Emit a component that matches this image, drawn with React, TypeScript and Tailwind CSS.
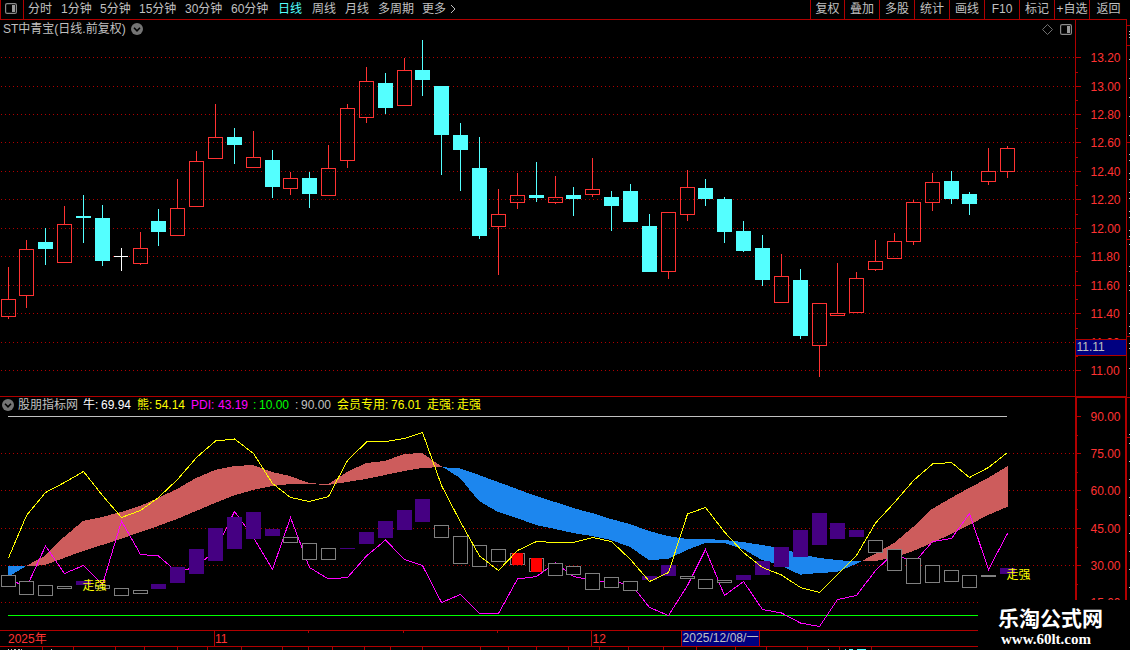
import React from "react";

type Kind = "up" | "down" | "flat";
// centre x, high, body top, body bottom, low, kind
type Candle = [number, number, number, number, number, Kind];

const candles: Candle[] = [
  [8, 267, 299, 317, 319, "up"], [26, 240, 249, 296, 308, "up"], [45, 228, 242, 249, 265, "down"],
  [64, 206, 224, 263, 263, "up"], [83, 195, 216, 218, 243, "down"], [102, 205, 218, 261, 266, "down"],
  [121, 248, 256, 257, 271, "flat"], [140, 232, 248, 264, 265, "up"], [158, 209, 221, 232, 246, "down"],
  [177, 179, 208, 236, 236, "up"], [196, 151, 161, 207, 207, "up"], [215, 104, 137, 159, 159, "up"],
  [234, 128, 137, 145, 164, "down"], [253, 131, 157, 168, 168, "up"], [272, 150, 160, 187, 198, "down"],
  [290, 172, 178, 189, 195, "up"], [309, 172, 178, 194, 208, "down"], [328, 145, 168, 196, 196, "up"],
  [347, 104, 108, 161, 168, "up"], [366, 67, 81, 118, 123, "up"], [385, 73, 83, 108, 114, "down"],
  [404, 58, 70, 106, 106, "up"], [422, 40, 70, 80, 96, "down"], [441, 86, 86, 135, 175, "down"],
  [460, 123, 135, 150, 191, "down"], [479, 137, 168, 236, 239, "down"], [498, 189, 214, 227, 275, "up"],
  [517, 173, 195, 203, 209, "up"], [536, 162, 195, 198, 202, "down"], [555, 176, 197, 203, 204, "up"],
  [573, 187, 195, 199, 216, "down"], [592, 158, 189, 195, 197, "up"], [611, 191, 197, 206, 231, "down"],
  [630, 184, 191, 222, 222, "down"], [649, 214, 226, 272, 272, "down"], [668, 212, 212, 272, 279, "up"],
  [687, 170, 187, 215, 221, "up"], [705, 179, 188, 199, 206, "down"], [724, 197, 199, 232, 243, "down"],
  [743, 221, 231, 251, 252, "down"], [762, 235, 248, 280, 286, "down"], [781, 254, 276, 303, 303, "up"],
  [800, 269, 280, 336, 339, "down"], [819, 303, 303, 346, 377, "up"], [837, 263, 313, 316, 316, "up"],
  [856, 272, 278, 313, 313, "up"], [875, 240, 261, 270, 271, "up"], [894, 233, 241, 259, 259, "up"],
  [913, 200, 202, 242, 245, "up"], [932, 173, 182, 203, 211, "up"], [951, 171, 181, 199, 204, "down"],
  [969, 192, 194, 204, 215, "down"], [988, 148, 171, 182, 185, "up"], [1007, 146, 148, 172, 178, "up"],
];

const xs = candles.map((c) => c[0]);

const fast = [
  577, 566, 555.7, 537, 521, 517, 512, 506, 498, 489, 478, 470, 466, 465, 472, 476, 483, 484.4, 472, 463, 461,
  454, 453, 466, 478, 501, 512, 518, 525, 529, 533, 536, 540, 547, 560, 559, 550, 543, 543, 549, 560, 565.5,
  574.7, 573, 572, 564, 554, 543, 527, 509, 498, 488, 478, 466,
];
const slow = [
  566, 566.5, 565, 558, 551, 545, 539, 532, 526, 519, 511, 503, 495.5, 490, 486, 484, 484, 485, 482, 479, 475,
  471, 468, 467, 468.5, 475, 482, 489, 496, 502, 508, 513, 519, 524, 531, 536, 539, 539, 540, 542, 545, 548, 554,
  558, 560, 561.5, 561, 557.5, 551, 543, 534, 525, 515, 506.5,
];
const yellow = [
  557.5, 515, 492, 482, 471, 495, 517, 510, 497, 479, 457, 440.5, 438.5, 453, 483, 497, 501, 496, 460, 441.5, 441,
  438, 432, 485, 521.5, 555.5, 570, 550, 541, 542, 542, 537, 541, 559, 581, 572, 513.5, 507, 531.5, 552, 567,
  574.5, 587, 592, 574, 555, 522.5, 502, 480, 463.5, 462, 477, 467, 452,
];
const pdi = [
  578, 587, 545.5, 573, 565, 584, 520.5, 554, 555.5, 572, 566, 550, 511, 537, 569, 517, 567, 578.5, 577, 555.5,
  539.5, 559, 565, 602, 594, 613, 613, 578.5, 576, 562.5, 576, 580, 582, 583, 607, 615, 585, 549, 595, 581, 609,
  612.5, 622.5, 626, 599, 595, 570, 552, 563, 541, 538, 513, 569, 533,
];

// top, bottom, g = outlined / p = filled / r = outlined with a red core
type Bar = [number, number, "g" | "p" | "r"];
const bars: Bar[] = [
  [575, 587, "g"], [581, 595, "g"], [585, 596, "g"], [586, 589, "g"], [581, 585, "p"], [585, 589, "g"],
  [588, 596, "g"], [590, 594, "g"], [584, 589, "p"], [567, 583, "p"], [549, 574, "p"], [528, 561, "p"],
  [517, 549, "p"], [512, 539, "p"], [529, 536, "p"], [537, 543, "g"], [543, 560, "g"], [548, 560, "g"],
  [548, 549, "p"], [532, 544, "p"], [521, 538, "p"], [510, 530, "p"], [499, 522, "p"], [525, 538, "g"],
  [536, 564, "g"], [545, 567, "g"], [549, 562, "g"], [553, 565, "r"], [558, 572, "r"], [563, 576, "g"],
  [566, 575, "g"], [573, 590, "g"], [577, 588, "g"], [581, 591, "g"], [576, 580, "p"], [565, 576, "p"],
  [576, 579, "g"], [579, 589, "g"], [580, 583, "g"], [575, 580, "p"], [561, 575, "p"], [547, 567, "p"],
  [530, 557, "p"], [513, 545, "p"], [523, 539, "p"], [530, 537, "p"], [540, 553, "g"], [549, 571, "g"],
  [558, 584, "g"], [565, 583, "g"], [570, 582, "g"], [575, 588, "g"], [575, 577, "g"], [568, 574, "p"],
];

const priceLevels: [string, number][] = [
  ["13.20", 57], ["13.00", 86], ["12.80", 114], ["12.60", 142], ["12.40", 171], ["12.20", 199],
  ["12.00", 228], ["11.80", 256], ["11.60", 285], ["11.40", 313], ["11.20", 342], ["11.00", 370],
];
const priceMinor = [72, 100, 128, 157, 185, 214, 242, 271, 299, 328, 356];
const indLevels: [string, number][] = [
  ["90.00", 416], ["75.00", 453], ["60.00", 490], ["45.00", 528], ["30.00", 565], ["15.00", 602],
];
const indMinor = [435, 472, 509, 547, 584];

const line = (ys: number[]) => ys.map((y, i) => `${xs[i] + 0.5},${y + 0.5}`).join(" ");

function bandPieces() {
  const out: { pts: string; fill: string }[] = [];
  const color = (d: number) => (d < 0 ? "#cd5c5c" : "#1c86ee");
  for (let i = 0; i < xs.length - 1; i++) {
    const x1 = xs[i];
    const x2 = i === xs.length - 2 ? xs[i + 1] + 1 : xs[i + 1];
    const d1 = fast[i] - slow[i];
    const d2 = fast[i + 1] - slow[i + 1];
    if (d1 * d2 < 0) {
      const t = d1 / (d1 - d2);
      const xc = x1 + (x2 - x1) * t;
      const yc = fast[i] + (fast[i + 1] - fast[i]) * t;
      out.push({ pts: `${x1},${fast[i]} ${xc},${yc} ${x1},${slow[i]}`, fill: color(d1) });
      out.push({ pts: `${xc},${yc} ${x2},${fast[i + 1]} ${x2},${slow[i + 1]}`, fill: color(d2) });
    } else {
      out.push({
        pts: `${x1},${fast[i]} ${x2},${fast[i + 1]} ${x2},${slow[i + 1]} ${x1},${slow[i]}`,
        fill: color(d1 + d2),
      });
    }
  }
  return out;
}

const Grid = ({ ys }: { ys: number[] }) => (
  <g>
    {ys.map((y) => (
      <line key={y} x1="1" x2="1075" y1={y + 0.5} y2={y + 0.5} stroke="#b00000" strokeDasharray="1 3" />
    ))}
  </g>
);

const CandleShape = ({ c }: { c: Candle }) => {
  const [x, h, t, b, l, k] = c;
  if (k === "flat")
    return (
      <g fill="#ffffff">
        <rect x={x - 7} y={t} width={14} height={1} />
        <rect x={x} y={h} width={1} height={l - h} />
      </g>
    );
  if (k === "down")
    return (
      <g fill="#54ffff">
        <rect x={x} y={h} width={1} height={l - h} />
        <rect x={x - 7} y={t} width={15} height={b - t} />
      </g>
    );
  return (
    <g fill="#ff3232">
      <rect x={x} y={h} width={1} height={t - h} />
      <rect x={x} y={b} width={1} height={l - b} />
      <rect x={x - 6.5} y={t + 0.5} width={14} height={b - t - 1} fill="none" stroke="#ff3232" />
    </g>
  );
};

const BarShape = ({ x, bar }: { x: number; bar: Bar }) => {
  const [t, b, k] = bar;
  if (k === "p") return <rect x={x - 7} y={t} width={15} height={b - t} fill="#450082" />;
  return (
    <g>
      <rect x={x - 6.5} y={t + 0.5} width={14} height={b - t - 1} fill="#000000" stroke="#808080" />
      {k === "r" && <rect x={x - 5} y={t} width={11} height={b - t} fill="#ff0000" />}
    </g>
  );
};

const Dropdown = () => (
  <svg className="block shrink-0" width="12" height="12" viewBox="0 0 12 12">
    <circle cx="6" cy="6" r="6" fill="#747474" />
    <path d="M3 4.8 L6 7.8 L9 4.8" fill="none" stroke="#000000" strokeWidth="1.6" />
  </svg>
);

const PanelIcon = () => (
  <svg className="block shrink-0" width="12" height="11" viewBox="0 0 12 11">
    <rect x="0.6" y="0.6" width="10.8" height="9.8" rx="1.5" fill="none" stroke="#8a8a8a" strokeWidth="1.2" />
    <rect x="7" y="2" width="3" height="7" fill="#9a9a9a" />
  </svg>
);

const periods: [string, string][] = [
  ["分时", "w-[33px]"], ["1分钟", "w-[39px]"], ["5分钟", "w-[39px]"], ["15分钟", "w-[46px]"],
  ["30分钟", "w-[46px]"], ["60分钟", "w-[47px]"], ["日线", "w-[34px]"], ["周线", "w-[33px]"],
  ["月线", "w-[33px]"], ["多周期", "w-[44px]"], ["更多", "w-[28px]"],
];
const tools: [string, string][] = [
  ["复权", "w-[34px]"], ["叠加", "w-[35px]"], ["多股", "w-[35px]"], ["统计", "w-[35px]"], ["画线", "w-[35px]"],
  ["F10", "w-[35px]"], ["标记", "w-[35px]"], ["+自选", "w-[35px]"], ["返回", "w-[38px]"],
];

const Toolbar = () => (
  <header className="flex h-5 shrink-0 border-b border-l border-[#b00000] text-[#c0c0c0]">
    <div className="flex w-[23px] items-center border-r border-[#b00000] pb-[2px] pl-1">
      <PanelIcon />
    </div>
    <nav className="flex flex-1 items-center pb-[2px] pl-1">
      {periods.map(([t, w]) => (
        <span key={t} className={`${w} shrink-0 ${t === "日线" ? "text-[#54ffff]" : ""}`}>
          {t}
        </span>
      ))}
      <svg width="6" height="10" viewBox="0 0 6 10">
        <path d="M1 1 L5 5 L1 9" fill="none" stroke="#c0c0c0" />
      </svg>
    </nav>
    <div className="flex">
      {tools.map(([t, w]) => (
        <span
          key={t}
          className={`${w} flex items-center justify-center border-l border-[#b00000] pb-[2px] whitespace-nowrap`}
        >
          {t}
        </span>
      ))}
    </div>
  </header>
);

const legend: [string, string][] = [
  ["股朋指标网", "w-[65px] text-[#c0c0c0]"], ["牛:", "w-[18px] text-white"], ["69.94", "w-[36px] text-white"],
  ["熊:", "w-[18px] text-[#ffff00]"], ["54.14", "w-[36px] text-[#ffff00]"], ["PDI:", "w-[27px] text-[#ff00ff]"],
  ["43.19", "w-[35px] text-[#ff00ff]"], [":", "w-[6px] text-[#00ff00]"], ["10.00", "w-[36px] text-[#00ff00]"],
  [":", "w-[6px] text-[#c0c0c0]"], ["90.00", "w-[36px] text-[#c0c0c0]"], ["会员专用:", "w-[54px] text-[#ffff00]"],
  ["76.01", "w-[36px] text-[#ffff00]"], ["走强:", "w-[30px] text-[#ffff00]"], ["走强", "w-[30px] text-[#ffff00]"],
];

const PricePanel = () => (
  <section className="flex h-[376px] shrink-0">
    <div className="flex w-[1075px] flex-col">
      <div className="flex h-5 shrink-0 items-center pb-[2px] pl-[3px] text-[#c0c0c0]">
        <span className="w-[128px]">ST中青宝(日线.前复权)</span>
        <Dropdown />
        <span className="flex-1" />
        <svg className="mr-[7px]" width="11" height="11" viewBox="0 0 11 11">
          <path d="M5.5 0.5 L10.5 5.5 L5.5 10.5 L0.5 5.5 Z" fill="none" stroke="#707070" />
        </svg>
        <span className="mr-[3px]">
          <PanelIcon />
        </span>
      </div>
      <svg className="block" width="1075" height="356" viewBox="0 40 1075 356" shapeRendering="crispEdges">
        <Grid ys={priceLevels.map((p) => p[1])} />
        {candles.map((c) => (
          <CandleShape key={c[0]} c={c} />
        ))}
      </svg>
    </div>
    <svg className="block" width="52" height="376" viewBox="1075 20 52 376" shapeRendering="crispEdges">
      <rect x="1075" y="20" width="1" height="376" fill="#b00000" />
      <rect x="1126" y="20" width="1" height="376" fill="#b00000" />
      {priceLevels.map(([t, y]) => (
        <g key={t}>
          <rect x="1075" y={y} width="6" height="1" fill="#b00000" />
          <text x="1090.5" y={y + 5} fill="#ff3232">{t}</text>
        </g>
      ))}
      {priceMinor.map((y) => (
        <rect key={y} x="1075" y={y} width="3" height="1" fill="#b00000" />
      ))}
      <rect x="1075" y="339" width="51" height="17" fill="#b00000" />
      <rect x="1076" y="340" width="50" height="15" fill="#000080" />
      <text x="1076.5" y="351" fill="#c0c0c0">11.11</text>
    </svg>
  </section>
);

const IndicatorPanel = () => (
  <section className="flex h-[234px] shrink-0">
    <div className="flex w-[1075px] flex-col">
      <div className="flex h-[19px] shrink-0 items-center border-t border-[#b00000] pb-[2px] pl-[2px]">
        <span className="w-[16px]">
          <Dropdown />
        </span>
        {legend.map(([t, c], i) => (
          <span key={i} className={`${c} shrink-0 whitespace-nowrap`}>
            {t}
          </span>
        ))}
      </div>
      <svg className="block" width="1075" height="215" viewBox="0 415 1075 215" shapeRendering="crispEdges">
        <Grid ys={indLevels.slice(1).map((p) => p[1])} />
        <rect x="8" y="416" width="999" height="1" fill="#c0c0c0" />
        {bandPieces().map((p, i) => (
          <polygon key={i} points={p.pts} fill={p.fill} />
        ))}
        <rect x="8" y="615" width="999" height="1" fill="#00ff00" />
        <polyline points={line(pdi)} fill="none" stroke="#ff00ff" />
        {bars.map((b, i) => (
          <BarShape key={i} x={xs[i]} bar={b} />
        ))}
        <polyline points={line(yellow)} fill="none" stroke="#ffff00" />
        <text x="82.5" y="590" fill="#ffff00">走强</text>
        <text x="1006.5" y="579" fill="#ffff00">走强</text>
      </svg>
    </div>
    <svg className="block" width="52" height="234" viewBox="1075 396 52 234" shapeRendering="crispEdges">
      <rect x="1075" y="396" width="52" height="2" fill="#b00000" />
      <rect x="1075" y="396" width="2" height="234" fill="#b00000" />
      <rect x="1125" y="396" width="2" height="234" fill="#b00000" />
      {indLevels.map(([t, y]) => (
        <g key={t}>
          <rect x="1077" y={y} width="4" height="1" fill="#b00000" />
          <text x="1090.5" y={y + 5} fill="#ff3232">{t}</text>
        </g>
      ))}
      {indMinor.map((y) => (
        <rect key={y} x="1077" y={y} width="1" height="1" fill="#b00000" />
      ))}
    </svg>
  </section>
);

const footTicks = [
  42, 73, 115, 144, 177, 207, 241, 282, 308, 332, 364, 390, 422, 480, 508, 536, 568, 599, 628, 663, 696, 735, 766,
  807, 839, 871,
];

const TimeAxis = () => (
  <svg className="block shrink-0" width="1127" height="20" viewBox="0 630 1127 20" shapeRendering="crispEdges">
    <g fill="#b00000">
      <rect x="0" y="630" width="1127" height="1" />
      <rect x="0" y="646" width="1127" height="1" />
      <rect x="214" y="630" width="1" height="16" />
      <rect x="591" y="630" width="1" height="16" />
      {[308, 403, 497].map((x) => (
        <rect key={x} x={x} y="631" width="1" height="2" />
      ))}
      {footTicks.map((x) => (
        <rect key={x} x={x} y="647" width="1" height="3" />
      ))}
      <rect x="681" y="630" width="79" height="17" />
    </g>
    <rect x="682" y="631" width="77" height="15" fill="#000080" />
    <text x="8" y="643" fill="#ff3232">2025年</text>
    <text x="215" y="643" fill="#ff3232">11</text>
    <text x="592.5" y="643" fill="#ff3232">12</text>
    <text x="682.5" y="642" fill="#c0c0c0" textLength="76">2025/12/08/一</text>
    <g fill="#c0c0c0">
      <rect x="8" y="649" width="1" height="1" />
      <rect x="11" y="649" width="1" height="1" />
      <rect x="14" y="649" width="2" height="1" />
      <rect x="18" y="649" width="2" height="1" />
      <rect x="21" y="649" width="1" height="1" />
      <rect x="51" y="649" width="1" height="1" />
      <rect x="828" y="649" width="1" height="1" />
    </g>
    <g fill="#54ffff">
      <rect x="845" y="649" width="1" height="1" />
      <rect x="849" y="649" width="4" height="1" />
      <rect x="857" y="649" width="9" height="1" />
    </g>
  </svg>
);

const edgeMarks = [
  31, 34, 37, 59, 78, 97, 116, 135, 154, 160, 173, 179, 192, 198, 211, 217, 230, 236, 244, 266, 271, 285, 290, 313,
  326, 333, 343, 348, 368, 434, 443, 461, 479, 497, 515, 533, 551, 569, 587,
];

const EdgeStrip = () => (
  <svg className="block shrink-0" width="3" height="650" viewBox="1127 0 3 650" shapeRendering="crispEdges">
    {[25, 45, 142, 239, 336, 397, 437].map((y) => (
      <rect key={y} x="1127" y={y} width="3" height="1" fill="#b00000" />
    ))}
    {edgeMarks.map((y) => (
      <rect key={y} x="1129" y={y} width="1" height="1" fill="#c0c0c0" />
    ))}
  </svg>
);

export default function App() {
  return (
    <div className="relative flex h-[650px] w-[1130px] overflow-hidden bg-black font-['Liberation_Sans','Noto_Sans_CJK_SC',sans-serif] text-[12px] leading-none">
      <main className="flex w-[1127px] shrink-0 flex-col">
        <Toolbar />
        <PricePanel />
        <IndicatorPanel />
        <TimeAxis />
      </main>
      <EdgeStrip />
      <div className="absolute right-0 bottom-0 flex h-[50px] w-[152px] flex-col bg-black pt-[8px] pl-[20px] text-white">
        <span className="text-[21px] leading-[22px] font-bold whitespace-nowrap">乐淘公式网</span>
        <span className="pl-[3px] font-['Liberation_Serif',serif] text-[15px] leading-[18px] font-bold">www.60lt.com</span>
      </div>
    </div>
  );
}
